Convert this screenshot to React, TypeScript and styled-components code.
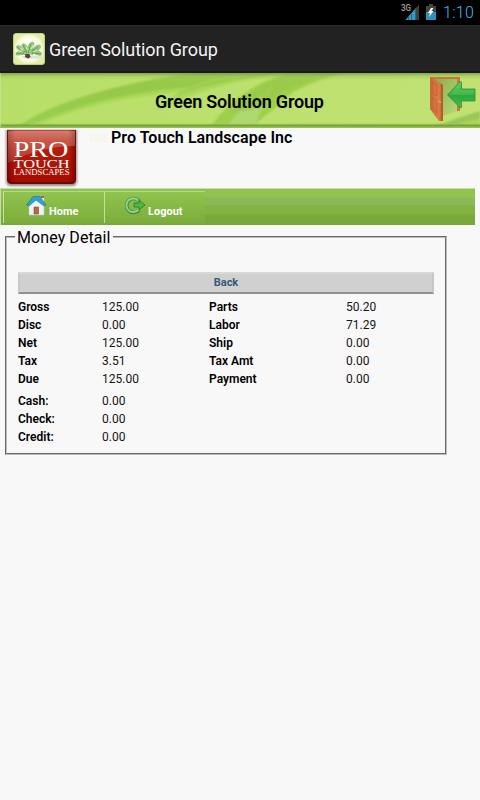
import React from 'react';
import styled, { createGlobalStyle } from 'styled-components';

const GlobalStyle = createGlobalStyle`
  * { box-sizing: border-box; }
  html, body { margin: 0; background: #f8f8f8; }
  body { font-family: Roboto, "Liberation Sans", sans-serif; color: #000; }
`;

const Screen = styled.div`
  width: 480px;
  height: 800px;
  overflow: hidden;
  display: flex;
  flex-direction: column;
  background: #f8f8f8;
`;

const StatusBar = styled.div`
  flex: none;
  height: 25px;
  background: #000;
  display: flex;
  justify-content: flex-end;
  align-items: center;
  padding-right: 6px;
`;

const StatusIcons = styled.svg`
  display: block;
  width: 42px;
  height: 25px;
`;

const Clock = styled.span`
  color: #3bbdf0;
  font-size: 16px;
  line-height: 25px;
  font-weight: 300;
  width: 31px;
  white-space: nowrap;
  letter-spacing: 0.3px;
`;

const ActionBar = styled.header`
  flex: none;
  height: 48px;
  background: #222;
  border-top: 1px solid #2d2d2d;
  border-bottom: 2px solid #191919;
  display: flex;
  align-items: center;
  gap: 4px;
  padding: 1px 0 0 13px;
`;

const AppIcon = styled.svg`
  width: 32px;
  height: 32px;
`;

const AppTitle = styled.span`
  color: #f3f3f3;
  font-size: 18px;
  letter-spacing: -0.08px;
  line-height: 24px;
  margin-top: 1px;
`;

const Banner = styled.div`
  flex: none;
  height: 55px;
  display: grid;
  grid-template-columns: 480px;
  grid-template-rows: 55px;
  & > * { grid-area: 1 / 1; }
`;

const BannerArt = styled.svg`
  display: block;
  width: 480px;
  height: 55px;
`;

const BannerContent = styled.div`
  z-index: 1;
  display: grid;
  grid-template-columns: 155px 270px 55px;
  align-items: center;
`;

const BannerTitle = styled.h1`
  grid-column: 2;
  margin: 3px 0 0;
  font-size: 18px;
  line-height: 22px;
  font-weight: 600;
  letter-spacing: -0.2px;
`;

const DoorIcon = styled.svg`
  display: block;
  width: 55px;
  height: 55px;
`;

const CompanyRow = styled.div`
  flex: none;
  height: 60px;
  display: flex;
  align-items: flex-start;
`;

const Logo = styled.svg`
  width: 90px;
  height: 60px;
`;

const CompanyCode = styled.span`
  width: 21px;
  font-size: 11px;
  line-height: 22px;
  color: #f5f5e6;
`;

const CompanyName = styled.h2`
  margin: 0;
  font-size: 16px;
  line-height: 19px;
  font-weight: 600;
  letter-spacing: 0.06px;
`;

const NavBar = styled.nav`
  flex: none;
  width: 475px;
  height: 37px;
  padding: 2px 0 3px 2px;
  border-top: 1px solid #c6dfa5;
  border-left: 1px solid #c6dfa5;
  background: linear-gradient(#91c351 0 8px, #8cb955 9px 15px, #82b343 17px 24px, #79a93a 27px);
  display: flex;
`;

const NavItem = styled.a<{ $width: number; $inset: number }>`
  width: ${p => p.$width}px;
  height: 32px;
  padding-left: ${p => p.$inset}px;
  border-top: 1px solid #b5d68d;
  border-left: 1px solid #c4dea9;
  background: linear-gradient(#91c34e, #7cad3b);
  display: flex;
  align-items: flex-start;
  gap: 2px;
  color: #fff;
  font-size: 11px;
  font-weight: 700;
  line-height: 13px;
  text-decoration: none;
  & > span { margin-top: 13px; }
`;

const NavIcon = styled.svg<{ $width: number }>`
  width: ${p => p.$width}px;
  height: 24px;
  flex: none;
`;

const Detail = styled.fieldset`
  flex: none;
  width: 442px;
  height: 228px;
  margin: 2px 0 0 5px;
  padding: 25px 11px 0;
  min-width: 0;
  border: 2px groove #bcbcbc;
`;

const DetailTitle = styled.legend`
  margin-left: -3px;
  padding: 1px 2px 0;
  font-size: 16px;
  line-height: 19px;
  width: 98px;
  white-space: nowrap;
  letter-spacing: 0.08px;
`;

const BackButton = styled.button`
  display: block;
  width: 416px;
  height: 22px;
  padding: 0;
  border: 2px solid;
  border-color: #d8d8d8 #c7c7c7 #8f8f8f #c9c9c9;
  border-radius: 1px;
  background: #d0d0d0;
  color: #36597a;
  font-family: inherit;
  font-size: 11px;
  font-weight: 700;
  line-height: 16px;
`;

const Table = styled.div`
  display: grid;
  grid-template-columns: 84px 107px 137px 88px;
  grid-auto-rows: 18px;
  margin-top: 4px;
  font-size: 12px;
  line-height: 18px;
`;

const Label = styled.span`
  grid-column: 1;
  font-weight: 600;
  &:nth-child(4n + 3) { grid-column: 3; }
`;

const PaymentLabel = styled(Label)`
  &&:nth-child(n) { grid-column: 1; }
`;

const Value = styled.span`
  letter-spacing: 0.03px;
  color: #151515;
`;

const amounts = [
  ['Gross', '125.00', 'Parts', '50.20'],
  ['Disc', '0.00', 'Labor', '71.29'],
  ['Net', '125.00', 'Ship', '0.00'],
  ['Tax', '3.51', 'Tax Amt', '0.00'],
  ['Due', '125.00', 'Payment', '0.00'],
];

const payments = [['Cash:', '0.00'], ['Check:', '0.00'], ['Credit:', '0.00']];

const PlantIcon = () => (
  <AppIcon viewBox="0 0 32 32">
    <defs>
      <radialGradient id="glow">
        <stop offset=".6" stopColor="#fffffb" />
        <stop offset=".85" stopColor="#f4f9d5" />
        <stop offset="1" stopColor="#e1eda3" />
      </radialGradient>
    </defs>
    <rect x=".5" y=".5" width="31" height="31" rx="2.5" fill="url(#glow)" stroke="#bdd181" />
    <ellipse cx="19" cy="24" rx="10" ry="1.8" fill="#dddfe0" />
    <g fill="#94c77a">
      <ellipse cx="6.5" cy="15" rx="3.6" ry="2.4" transform="rotate(35 6.5 15)" />
      <ellipse cx="7" cy="20" rx="4.5" ry="2.3" transform="rotate(-15 7 20)" />
      <ellipse cx="12" cy="14" rx="4.4" ry="2.4" transform="rotate(50 12 14)" />
      <ellipse cx="12" cy="19" rx="4" ry="3" />
      <ellipse cx="18" cy="12.5" rx="4.4" ry="2.6" transform="rotate(-55 18 12.5)" />
      <ellipse cx="18" cy="18" rx="4" ry="3.5" />
      <ellipse cx="24" cy="15" rx="4.4" ry="2.6" transform="rotate(-35 24 15)" />
      <ellipse cx="24.5" cy="20" rx="4.4" ry="2.4" transform="rotate(15 24.5 20)" />
    </g>
    <path d="m4 14 5 3M3 21l6-1M10 12l4 8M18 11l-3 9M25 14l-6 4M28 21l-8-1M12 18l-3 4M21 16l-2 6" stroke="#5b9650" strokeWidth=".8" />
    <path d="m7 15 3 2M13 14l2 3M20 12l-2 4M24 17l-4 2M6 19l3-1" stroke="#cfeaba" strokeWidth="1.1" />
    <path d="m12.5 21 4 0 1 3-2.5 1.5L12 24Z" fill="#63402b" />
  </AppIcon>
);

const Door = () => (
  <DoorIcon viewBox="425 73 55 55">
    <defs>
      <linearGradient id="wood"><stop stopColor="#c96838" /><stop offset=".7" stopColor="#dc7d43" /><stop offset="1" stopColor="#b9592a" /></linearGradient>
      <linearGradient id="arrow" x2="0" y2="1"><stop stopColor="#62cb66" /><stop offset=".5" stopColor="#2ba83a" /><stop offset="1" stopColor="#45bd4c" /></linearGradient>
      <linearGradient id="opening" x2="1" y2="1"><stop stopColor="#86aa4c" /><stop offset="1" stopColor="#b9db78" /></linearGradient>
    </defs>
    <path d="M430 77h30v34h-3V79h-27z" fill="#d07538" />
    <path d="M432 79h25v32l-14 5z" fill="url(#opening)" />
    <path d="M430 77h2l11 8v36h-4l-9-12Z" fill="url(#wood)" />
    <path d="m441 84 2 1.5V121h-2Z" fill="#b65b2b" />
    <path d="m432 82 5 3v11l-5-3ZM432 98l5 3v12l-5-6Z" fill="none" stroke="#b85b30" strokeWidth=".6" />
    <path d="M438 102q1.500-2 3 1" fill="none" stroke="#b9aaa0" strokeWidth="1.2" />
    <path d="m447.500 95 12-13q2-1.500 2 1V89H475v12h-13.500v6q0 2-2 0Z" fill="url(#arrow)" stroke="#2f913a" strokeWidth=".8" />
    <path d="m449 95 11-12v7h14v5z" fill="#73d16e" opacity=".35" />
  </DoorIcon>
);

const CompanyLogo = () => (
  <Logo viewBox="0 128 90 60">
    <defs>
      <linearGradient id="red" x2="0" y2="1"><stop stopColor="#bd4935" /><stop offset=".2" stopColor="#b8220e" /><stop offset="1" stopColor="#a40b00" /></linearGradient>
      <linearGradient id="edge"><stop stopColor="#5b0000" stopOpacity=".7" /><stop offset=".13" stopColor="#a00" stopOpacity="0" /><stop offset=".88" stopColor="#a00" stopOpacity="0" /><stop offset="1" stopColor="#500" stopOpacity=".7" /></linearGradient>
      <linearGradient id="gloss" x2="0" y2="1"><stop stopColor="#fff" stopOpacity=".3" /><stop offset="1" stopColor="#fff" stopOpacity=".12" /></linearGradient>
      <filter id="shadow"><feGaussianBlur stdDeviation="1" /></filter>
    </defs>
    <path d="M6 130h71v51q0 5-5 5H11q-5 0-5-5Z" fill="#948989" filter="url(#shadow)" />
    <path d="M7 130h69v49q0 5-5 5H12q-5 0-5-5Z" fill="url(#red)" />
    <path d="M7 130h69v49q0 5-5 5H12q-5 0-5-5Z" fill="url(#edge)" />
    <path d="M8 131h67v15q-34 0-67 17Z" fill="url(#gloss)" />
    <path d="M8 180q1 4 5 4h57q4 0 5-4-2 2-6 2H14q-4 0-6-2Z" fill="#6b0a04" />
    <g fill="#fff" fontFamily="Liberation Serif, serif">
      <text x="13.5" y="156.5" fontSize="23.5" textLength="55" lengthAdjust="spacingAndGlyphs">PRO</text>
      <text x="13.5" y="167.5" fontSize="13.5" textLength="56" lengthAdjust="spacingAndGlyphs">TOUCH</text>
      <text x="13.5" y="174.8" fontSize="8" textLength="56" lengthAdjust="spacingAndGlyphs">LANDSCAPES</text>
    </g>
  </Logo>
);

export default function App() {
  return (
    <>
      <GlobalStyle />
      <Screen>
        <StatusBar>
          <StatusIcons viewBox="401 0 42 25">
            <text x="401" y="11" fill="#9a9a9a" fontFamily="Roboto, sans-serif" fontSize="8.5" fontWeight="600" textLength="10" lengthAdjust="spacingAndGlyphs">3G</text>
            <path d="M405.5 20 419 4.500V20Z" fill="#404040" />
            <path d="M405.5 20 416 8v12Z" fill="#2f9cc4" />
            <path d="M408.5 17v3M411.5 14v6M415.5 9v11" stroke="#15566d" strokeWidth=".7" />
            <path d="M429 4h4v2h3v14h-10V6h3Z" fill="#444" />
            <path d="M426 12h10v8h-10Z" fill="#2d91b8" />
            <path d="m431 8-3 5h2l-1 4 4.5-6h-2l2-3Z" fill="#fff" />
          </StatusIcons>
          <Clock>1:10</Clock>
        </StatusBar>
        <ActionBar>
          <PlantIcon />
          <AppTitle>Green Solution Group</AppTitle>
        </ActionBar>
        <Banner>
          <BannerArt viewBox="0 73 480 55">
            <defs>
              <linearGradient id="leaf" x1="0" y1="1" x2="1" y2="0"><stop stopColor="#9bcf50" /><stop offset=".5" stopColor="#96c94a" /><stop offset="1" stopColor="#99c94c" /></linearGradient>
              <linearGradient id="rim" x2="0" y2="1"><stop stopColor="#719344" stopOpacity=".8" /><stop offset=".07" stopColor="#9ac057" stopOpacity=".35" /><stop offset=".15" stopColor="#b9df6a" stopOpacity="0" /><stop offset=".9" stopColor="#b9df6a" stopOpacity="0" /><stop offset=".95" stopColor="#769d37" /><stop offset="1" stopColor="#9cca55" /></linearGradient>
              <linearGradient id="base"><stop stopColor="#b7df68" /><stop offset="1" stopColor="#c1e273" /></linearGradient>
              <filter id="softBanner"><feGaussianBlur stdDeviation=".8" /></filter>
            </defs>
            <rect y="73" width="480" height="55" fill="url(#base)" />
            <g filter="url(#softBanner)">
              <path d="M32 128Q92 98 202 90L245 78 200 76Q90 90 20 128Z" fill="#a8d955" />
              <path d="M15 128Q69 91 190 73h78Q235 79 207 86 105 91 29 126Z" fill="url(#leaf)" />
              <path d="M165 102Q193 78 257 73h35Q208 83 154 112Z" fill="#a9d85a" />
              <path d="M172 97Q200 80 258 74h20Q211 81 172 97Z" fill="#98c94b" />
              <path d="M210 128Q226 102 263 82L288 73h56Q318 79 293 92 276 108 250 128Z" fill="#9fd04c" />
              <path d="M226 128Q245 99 278 84q-14 15-24 44Z" fill="#add970" />
              <path d="M260 108Q285 84 340 73h-54q-40 19-55 40Z" fill="#98c849" opacity=".8" />
              <path d="M432 128q21-9 48-17v8q-14 3-23 9Z" fill="#99c75a" />
              <path d="M450 128q13-7 30-9v9Z" fill="#acd659" />
            </g>
            <rect y="73" width="480" height="55" fill="url(#rim)" />
            <path d="M.5 73v54" stroke="#d3e79d" opacity=".6" />
          </BannerArt>
          <BannerContent>
            <BannerTitle>Green Solution Group</BannerTitle>
            <Door />
          </BannerContent>
        </Banner>
        <CompanyRow>
          <CompanyLogo />
          <CompanyCode>005</CompanyCode>
          <CompanyName>Pro Touch Landscape Inc</CompanyName>
        </CompanyRow>
        <NavBar>
          <NavItem $width={101} $inset={22} href="#home">
            <NavIcon $width={21} viewBox="27 192 21 24">
              <path d="m30 205 7-7 8 7v10H30Z" fill="#f0f3f5" stroke="#b9c6cc" strokeWidth=".6" />
              <path d="M42 197h3v7l-3-3Z" fill="#e9eff0" />
              <path d="M42 196h3v2h-3Z" fill="#cf4d42" />
              <path d="m27.5 205 6.500-8.500h7L47 205l-2 1-8-6-7 6Z" fill="#2ea3cf" stroke="#21708f" strokeWidth=".6" />
              <path d="M35 207h4.500v7H35Z" fill="#b36b3c" stroke="#825033" strokeWidth=".6" />
            </NavIcon>
            <span>Home</span>
          </NavItem>
          <NavItem $width={101} $inset={19} href="#logout">
            <NavIcon $width={22} viewBox="124 192 22 24">
              <path d="M139 201a7 7 0 1 0 0 9" fill="none" stroke="#35834a" strokeWidth="3.6" />
              <path d="M138.500 201a6.800 6.800 0 1 0 0 8.500" fill="none" stroke="#8bd582" strokeWidth="2.2" />
              <path d="M134 203h5v-3l6 5-6 5v-3h-5Z" fill="#48ba45" stroke="#27672b" strokeWidth=".7" />
            </NavIcon>
            <span>Logout</span>
          </NavItem>
        </NavBar>
        <Detail>
          <DetailTitle>Money Detail</DetailTitle>
          <BackButton type="button">Back</BackButton>
          <Table>
            {amounts.map(([name, value, otherName, otherValue]) => (
              <React.Fragment key={name}>
                <Label>{name}</Label>
                <Value>{value}</Value>
                <Label>{otherName}</Label>
                <Value>{otherValue}</Value>
              </React.Fragment>
            ))}
          </Table>
          <Table>
            {payments.map(([name, value]) => (
              <React.Fragment key={name}>
                <PaymentLabel>{name}</PaymentLabel>
                <Value>{value}</Value>
              </React.Fragment>
            ))}
          </Table>
        </Detail>
      </Screen>
    </>
  );
}
